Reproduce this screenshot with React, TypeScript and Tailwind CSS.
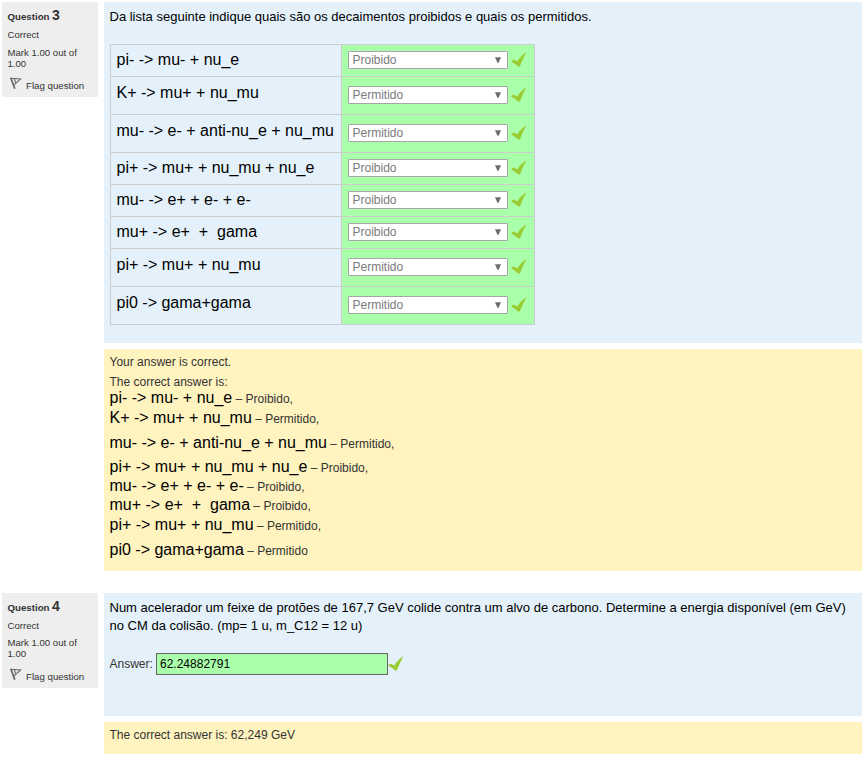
import React from "react";

const decays = [
  { text: "pi- -> mu- + nu_e", answer: "Proibido", row: "h-[32px]", line: "leading-[30px]", gap: "" },
  { text: "K+ -> mu+ + nu_mu", answer: "Permitido", row: "h-[38px]", line: "leading-[31px]", gap: "mt-px" },
  { text: "mu- -> e- + anti-nu_e + nu_mu", answer: "Permitido", row: "h-[38px]", line: "leading-[31px]", gap: "mt-[6px]" },
  { text: "pi+ -> mu+ + nu_mu + nu_e", answer: "Proibido", row: "h-[32px]", line: "leading-[30px]", gap: "mt-[5px]" },
  { text: "mu- -> e+ + e- + e-", answer: "Proibido", row: "h-[32px]", line: "leading-[30px]", gap: "" },
  { text: "mu+ -> e+\u00a0 +\u00a0 gama", answer: "Proibido", row: "h-[32px]", line: "leading-[30px]", gap: "" },
  { text: "pi+ -> mu+ + nu_mu", answer: "Permitido", row: "h-[38px]", line: "leading-[31px]", gap: "mt-px" },
  { text: "pi0 -> gama+gama", answer: "Permitido", row: "h-[38px]", line: "leading-[31px]", gap: "mt-[6px]" },
];

function Check() {
  return (
    <svg width="16" height="16" viewBox="0 0 16 16" className="block shrink-0">
      <path d="M0 9.3 L2.6 7.5 L6.2 9.6 C8.6 5.6 11.8 2.4 15.4 0 C13 4.6 11 9.6 8.8 14.4 L7 14.6 C5 12.4 2.6 10.8 0 9.3Z" fill="#99cc33" />
    </svg>
  );
}

function Flag() {
  return (
    <svg width="12" height="13" viewBox="0 0 12 13" className="block shrink-0" fill="none" stroke="#6b6b6b" strokeWidth="1.1">
      <path d="M0.8 0.8 L4.8 11.8" strokeWidth="1.8" />
      <path d="M1 1.3 L10.6 2 L3.8 8.2" />
      <path d="M4.4 1.8 L5.8 6" />
    </svg>
  );
}

function Info({ number, markGap, flagGap }: { number: string; markGap: string; flagGap: string }) {
  return (
    <aside className="h-[95px] w-[96px] shrink-0 bg-[#eeeeee] pl-[5.5px] text-[9.6px] text-[#333]">
      <h3 className="flex h-[25px] items-baseline pt-[5px] font-bold leading-[16px]">
        <span className="text-[9.7px]">Question</span>
        <span className="ml-[2.5px] text-[14px]">{number}</span>
      </h3>
      <div className="mt-[2px] leading-[11px]">Correct</div>
      <div className={`${markGap} leading-[11px]`}>Mark 1.00 out of<br />1.00</div>
      <div className={`${flagGap} ml-[2px] flex`}>
        <Flag />
        <span className="ml-[4.5px] pt-[3px] text-[9.7px] leading-[11px]">Flag question</span>
      </div>
    </aside>
  );
}

export default function App() {
  return (
    <main className="h-[757px] w-[865px] overflow-hidden bg-white pl-[2px] pt-[2px] font-['Liberation_Sans',Arial,sans-serif] text-[12px] text-[#333]">
      <section className="flex gap-[6px]">
        <Info number="3" markGap="mt-[7px]" flagGap="mt-[8px]" />
        <div className="w-[758px]">
          <div className="h-[341px] bg-[#e4f1fa] pl-[6px] pt-[6px]">
            <p className="-ml-[0.5px] whitespace-nowrap text-[13px] leading-[18px] text-black">
              Da lista seguinte indique quais são os decaimentos proibidos e quais os permitidos.
            </p>
            <div className="mt-[18px] w-[425px] border-b border-r border-[#ccc]">
              {decays.map((d, i) => (
                <div key={i} className={`flex ${d.row}`}>
                  <div className={`w-[231px] whitespace-nowrap border-l border-t border-[#ccc] pl-[5.5px] text-[16px] text-black ${d.line}`}>
                    {d.text}
                  </div>
                  <div className="flex flex-1 items-center border-l border-t border-[#ccc] bg-[#aaffaa] pb-[2px] pl-[6px]">
                    <div className="flex h-[18px] w-[160px] items-center justify-between rounded-[1px] border border-[#a6a6a6] bg-white pl-[3.5px] pr-[6px] text-[12px] leading-[16px] text-[#7b7b7b]">
                      <span>{d.answer}</span>
                      <svg width="6" height="6" viewBox="0 0 6 6"><path d="M0 0.2H6L3.6 5.8H2.4Z" fill="#6d6d6d" /></svg>
                    </div>
                    <div className="ml-[3px]"><Check /></div>
                  </div>
                </div>
              ))}
            </div>
          </div>
          <div className="mt-[6px] h-[222px] whitespace-nowrap bg-[#fff3bf] pl-[5.5px] pt-[4px]">
            <p className="leading-[18px]">Your answer is correct.</p>
            <p className="mt-[2px] h-[15px] leading-[18px]">The correct answer is:</p>
            {decays.map((d, i) => (
              <div key={i} className={`h-[19px] leading-[19px] ${d.gap}`}>
                <span className="text-[16px] text-black">{d.text}</span>
                <span> – {d.answer}{i < decays.length - 1 ? "," : ""}</span>
              </div>
            ))}
          </div>
        </div>
      </section>
      <section className="mt-[22px] flex gap-[6px]">
        <Info number="4" markGap="mt-[6px]" flagGap="mt-[9px]" />
        <div className="w-[758px]">
          <div className="h-[123px] bg-[#e4f1fa] pl-[6px] pt-[6px]">
            <p className="-ml-[0.5px] whitespace-nowrap text-[13px] leading-[18px] text-black">
              Num acelerador um feixe de protões de 167,7 GeV colide contra um alvo de carbono. Determine a energia disponível (em GeV)
              <br />
              no CM da colisão. (mp= 1 u, m_C12 = 12 u)
            </p>
            <div className="mt-[18px] flex items-center">
              <label className="-ml-[0.5px] w-[46.5px]">Answer:</label>
              <div className="h-[22px] w-[232px] border border-[#666] bg-[#aaffaa] pl-[3px] text-[12px] leading-[20px] text-black">62.24882791</div>
              <Check />
            </div>
          </div>
          <div className="mt-[6px] h-[32px] bg-[#fff3bf] pl-[5.5px] pt-[4px] leading-[18px]">The correct answer is: 62,249 GeV</div>
        </div>
      </section>
    </main>
  );
}
